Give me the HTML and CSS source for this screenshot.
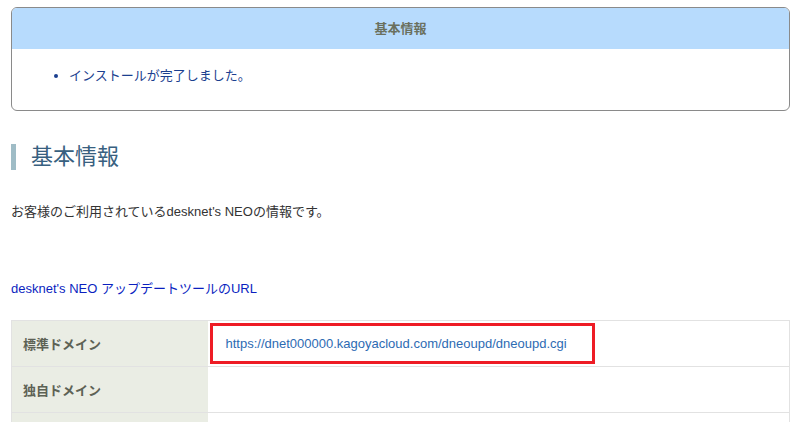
FILE: index.html
```html
<!DOCTYPE html>
<html lang="ja">
<head>
<meta charset="utf-8">
<link rel="stylesheet" href="styles.css">
</head>
<body>
<div class="page">
  <div class="msgbox">
    <div class="msgbox-head">基本情報</div>
    <div class="msgbox-body">
      <ul class="msglist">
        <li>インストールが完了しました。</li>
      </ul>
    </div>
  </div>

  <h2 class="section-title">基本情報</h2>

  <p class="lead">お客様のご利用されているdesknet's NEOの情報です。</p>

  <p class="sublink">desknet's NEO アップデートツールのURL</p>

  <table class="info">
    <tr>
      <th>標準ドメイン</th>
      <td><span class="highlight"><a class="url" href="#">https://dnet000000.kagoyacloud.com/dneoupd/dneoupd.cgi</a></span></td>
    </tr>
    <tr>
      <th>独自ドメイン</th>
      <td></td>
    </tr>
    <tr class="last">
      <th></th>
      <td></td>
    </tr>
  </table>
</div>
</body>
</html>
```

FILE: styles.css
```css
* { box-sizing: border-box; }
html, body { margin: 0; padding: 0; background: #fff; }
body {
  font-family: "Liberation Sans", Arial, "Noto Sans CJK JP", sans-serif;
  font-size: 13px;
  color: #333;
  overflow: hidden;
}
.page {
  padding: 7px 8px 0 11px;
}
.msgbox {
  border: 1px solid #8a8a8a;
  border-radius: 6px;
  overflow: hidden;
  height: 104px;
}
.msgbox-head {
  background: #b7dbfd;
  height: 41px;
  line-height: 42px;
  text-align: center;
  font-weight: bold;
  color: #6a705e;
  font-size: 13px;
}
.msgbox-body {
  padding-top: 20px;
}
.msglist {
  margin: 0;
  padding-left: 57px;
  color: #1b3f8f;
  font-size: 13px;
  line-height: 14px;
}
.section-title {
  margin: 33px 0 0 0;
  border-left: 5px solid #9fbcc6;
  padding-left: 15px;
  font-size: 22px;
  font-weight: normal;
  line-height: 26px;
  color: #386080;
}
.lead {
  margin: 32px 0 0 0;
  line-height: 20px;
}
.sublink {
  margin: 57px 0 0 0;
  line-height: 20px;
  color: #0b1fbf;
}
.info {
  margin-top: 21px;
  width: 779px;
  border-collapse: collapse;
  border: 1px solid #e2e2e2;
}
.info th, .info td {
  border-bottom: 1px solid #e2e2e2;
  height: 46px;
  padding: 0;
  vertical-align: middle;
}
.info th {
  width: 196px;
  background: #eaede4;
  text-align: left;
  padding-left: 11px;
  font-weight: bold;
  color: #5d6255;
  font-size: 13px;
}
.info td {
  padding-left: 2px;
}
.highlight {
  display: inline-block;
  border: 3px solid #ee1c25;
  width: 385px;
  height: 41px;
  line-height: 35px;
  padding-left: 13px;
}
.url {
  color: #2d6bb3;
  text-decoration: none;
  font-size: 13px;
}
```
